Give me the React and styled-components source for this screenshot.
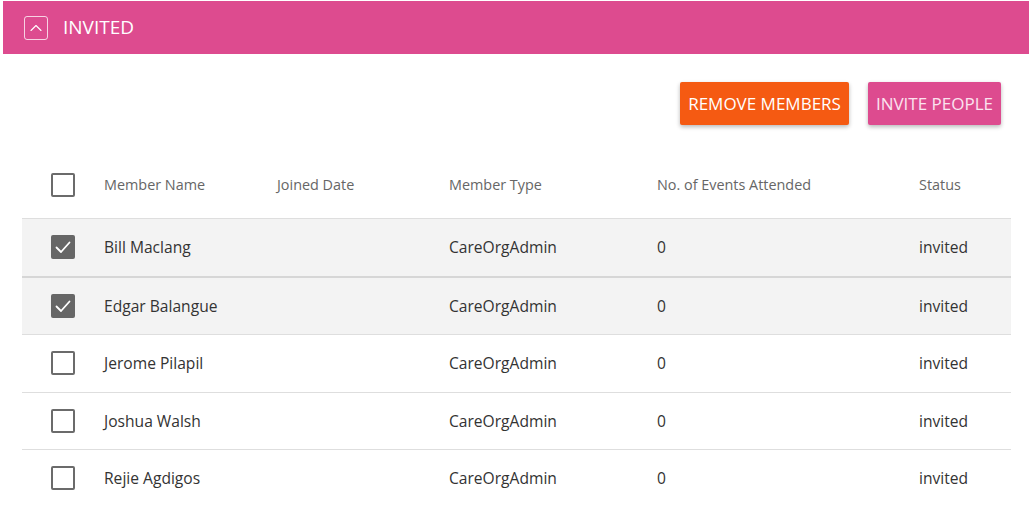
import React from "react";
import styled, { createGlobalStyle } from "styled-components";

const GlobalStyle = createGlobalStyle`
  html, body {
    margin: 0;
    padding: 0;
    background: #fff;
    font-family: "Open Sans", "Liberation Sans", sans-serif;
  }
`;

const members = [
  { name: "Bill Maclang", joined: "", type: "CareOrgAdmin", events: 0, status: "invited", checked: true },
  { name: "Edgar Balangue", joined: "", type: "CareOrgAdmin", events: 0, status: "invited", checked: true },
  { name: "Jerome Pilapil", joined: "", type: "CareOrgAdmin", events: 0, status: "invited", checked: false },
  { name: "Joshua Walsh", joined: "", type: "CareOrgAdmin", events: 0, status: "invited", checked: false },
  { name: "Rejie Agdigos", joined: "", type: "CareOrgAdmin", events: 0, status: "invited", checked: false },
];

const Page = styled.div`
  padding: 1px 3px 0 3px;
`;

const SectionBar = styled.div`
  display: flex;
  align-items: center;
  height: 53px;
  background: #dd4b8f;
  padding-left: 21px;
  gap: 15px;
`;

const ToggleIcon = styled.div`
  width: 22px;
  height: 22px;
  border: 1px solid rgba(255, 255, 255, 0.75);
  border-radius: 3px;
  display: flex;
  align-items: center;
  justify-content: center;
`;

const BarTitle = styled.h3`
  margin: 0 0 2px 0;
  color: #fff;
  font-size: 19px;
  font-weight: 400;
`;

const Content = styled.div`
  padding: 0 18px 0 19px;
`;

const Toolbar = styled.div`
  display: flex;
  justify-content: flex-end;
  gap: 19px;
  padding: 28px 10px 0 0;
`;

const Button = styled.button`
  height: 43px;
  padding: 0 8px;
  border: none;
  border-radius: 2px;
  background: ${(p) => (p.$variant === "danger" ? "#f55a12" : "#dd4b8f")};
  color: ${(p) => (p.$variant === "danger" ? "#fff" : "#fbe3ef")};
  font-family: "Open Sans", "Liberation Sans", sans-serif;
  font-size: 17px;
  font-weight: 400;
  box-shadow: 0 2px 4px rgba(0, 0, 0, 0.28);
  cursor: pointer;
`;

const Table = styled.div`
  margin-top: 36px;
`;

const Row = styled.div`
  display: grid;
  grid-template-columns: 82px 173px 172px 208px 262px 1fr;
  align-items: center;
  height: 56.5px;
  background: ${(p) => (p.$selected ? "#f3f3f3" : "#fff")};
  border-bottom: ${(p) => (p.$thick ? "2px solid #d6d6d6" : "1px solid #dedede")};

  &:last-child {
    border-bottom: none;
  }
`;

const HeadRow = styled(Row)`
  height: 47px;
  padding-bottom: 10px;
`;

const CheckCell = styled.div`
  padding-left: 29px;
  display: flex;
  align-items: center;
`;

const Box = styled.span`
  width: 24px;
  height: 24px;
  box-sizing: border-box;
  border-radius: 2px;
  border: ${(p) => (p.$checked ? "none" : "2px solid #6b6b6b")};
  background: ${(p) => (p.$checked ? "#666" : "transparent")};
  display: flex;
  align-items: center;
  justify-content: center;
`;

const HeadCell = styled.div`
  font-size: 14.4px;
  color: #666;
`;

const Cell = styled.div`
  font-size: 15.6px;
  color: #333;
`;

const Checkbox = ({ checked }) => (
  <Box $checked={checked}>
    {checked && (
      <svg width="20" height="20" viewBox="0 0 20 20">
        <path d="M3.5 10.5 L8 15 L16.5 5.5" fill="none" stroke="#fff" strokeWidth="1.8" strokeLinecap="round" strokeLinejoin="round" />
      </svg>
    )}
  </Box>
);

const App = () => {
  return (
    <Page>
      <GlobalStyle />
      <SectionBar>
        <ToggleIcon>
          <svg width="14" height="14" viewBox="0 0 14 14">
            <path d="M2 9.5 L7 4.5 L12 9.5" fill="none" stroke="#fff" strokeWidth="1.1" strokeLinecap="round" strokeLinejoin="round" />
          </svg>
        </ToggleIcon>
        <BarTitle>INVITED</BarTitle>
      </SectionBar>
      <Content>
        <Toolbar>
          <Button $variant="danger">REMOVE MEMBERS</Button>
          <Button>INVITE PEOPLE</Button>
        </Toolbar>
        <Table>
          <HeadRow>
            <CheckCell>
              <Checkbox checked={false} />
            </CheckCell>
            <HeadCell>Member Name</HeadCell>
            <HeadCell>Joined Date</HeadCell>
            <HeadCell>Member Type</HeadCell>
            <HeadCell>No. of Events Attended</HeadCell>
            <HeadCell>Status</HeadCell>
          </HeadRow>
          {members.map((m, i) => (
            <Row key={m.name} $selected={m.checked} $thick={m.checked && members[i + 1] && members[i + 1].checked}>
              <CheckCell>
                <Checkbox checked={m.checked} />
              </CheckCell>
              <Cell>{m.name}</Cell>
              <Cell>{m.joined}</Cell>
              <Cell>{m.type}</Cell>
              <Cell>{m.events}</Cell>
              <Cell>{m.status}</Cell>
            </Row>
          ))}
        </Table>
      </Content>
    </Page>
  );
};

export default App;
